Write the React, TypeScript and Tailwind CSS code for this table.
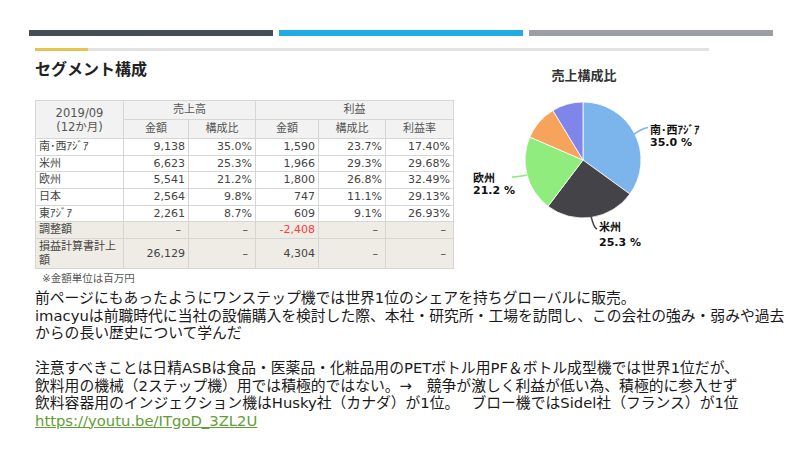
import React from "react";

const jp = { fontFamily: '"DejaVu Sans", "Noto Sans CJK JP", sans-serif' };
const cjk = { fontFamily: '"Noto Sans CJK JP", sans-serif' };

type Row = { name: string; v: string[] };

const rows: Row[] = [
  { name: "南･西ｱｼﾞｱ", v: ["9,138", "35.0%", "1,590", "23.7%", "17.40%"] },
  { name: "米州", v: ["6,623", "25.3%", "1,966", "29.3%", "29.68%"] },
  { name: "欧州", v: ["5,541", "21.2%", "1,800", "26.8%", "32.49%"] },
  { name: "日本", v: ["2,564", "9.8%", "747", "11.1%", "29.13%"] },
  { name: "東ｱｼﾞｱ", v: ["2,261", "8.7%", "609", "9.1%", "26.93%"] },
];

const cell = "border border-[#d6d6d6] px-[3px] leading-[14px]";

const Dash = () => <span className="pr-[4px] text-[#444]">–</span>;

// highcharts-ish pie, coords in page pixels
const slices = [
  { color: "#7cb5ec", d: "M583 160 L583 102 A58 58 0 0 1 629.9 194.1 Z" },
  { color: "#434348", d: "M583 160 L629.9 194.1 A58 58 0 0 1 548 206.3 Z" },
  { color: "#90ed7d", d: "M583 160 L548 206.3 A58 58 0 0 1 529.8 137 Z" },
  { color: "#f7a35c", d: "M583 160 L529.8 137 A58 58 0 0 1 552.9 110.5 Z" },
  { color: "#8085e9", d: "M583 160 L552.9 110.5 A58 58 0 0 1 583 102 Z" },
];

const PieChart = () => (
  <svg width="270" height="200" viewBox="460 60 270 200" className="mt-[2px]">
    <text x="584" y="80" textAnchor="middle" fontSize="13" fontWeight="bold" fill="#333" style={cjk}>
      売上構成比
    </text>
    {slices.map((s, i) => (
      <path key={i} d={s.d} fill={s.color} stroke="#fff" strokeWidth="0.8" />
    ))}
    <path d="M634 134 C639 131 643 128 648 127.5" fill="none" stroke="#7cb5ec" strokeWidth="1.5" />
    <path d="M591 217 C593 221 593 227 597 229" fill="none" stroke="#434348" strokeWidth="1.5" />
    <path d="M527 175 C522 176 517 177 512 177" fill="none" stroke="#90ed7d" strokeWidth="1.5" />
    <g fontSize="11" fontWeight="bold" fill="#111" style={jp}>
      <text x="650" y="134">南･西ｱｼﾞｱ</text>
      <text x="650" y="146">35.0 %</text>
      <text x="473" y="182">欧州</text>
      <text x="473" y="194">21.2 %</text>
      <text x="599" y="231">米州</text>
      <text x="599" y="246">25.3 %</text>
    </g>
  </svg>
);

const App: React.FC = () => {
  return (
    <div className="w-[800px] h-[450px] bg-white overflow-hidden text-[#1a1a1a]" style={jp}>
      {/* top bars */}
      <div className="flex gap-[6px] pt-[30px] pl-[29px]">
        <div className="w-[244px] h-[6px] bg-[#454e55]" />
        <div className="w-[244px] h-[6px] bg-[#1eade3]" />
        <div className="w-[244px] h-[6px] bg-[#9b9fa5]" />
      </div>
      <div className="ml-[35px] mt-[12px] w-[674px] h-[3px] bg-[#e2e2e2] flex">
        <div className="w-[53px] h-full bg-[#e6c24f]" />
      </div>

      <div className="flex h-[231px] mt-[7px] pl-[35px]">
        <div className="w-[425px] flex flex-col">
          <div className="text-[16px] leading-[20px] font-bold text-[#222]" style={cjk}>
            セグメント構成
          </div>
          <table className="mt-[22px] border-collapse table-fixed w-[418px] text-[11px] text-[#444]">
            <colgroup>
              <col className="w-[88px]" />
              <col className="w-[65px]" />
              <col className="w-[67px]" />
              <col className="w-[63px]" />
              <col className="w-[67px]" />
              <col className="w-[68px]" />
            </colgroup>
            <thead className="bg-[#f2f2f2] text-[#555]">
              <tr className="h-[19px]">
                <th rowSpan={2} className={`${cell} font-normal text-center text-[11.5px]`}>
                  2019/09
                  <br />
                  (12か月)
                </th>
                <th colSpan={2} className={`${cell} font-normal text-center`}>
                  売上高
                </th>
                <th colSpan={3} className={`${cell} font-normal text-center`}>
                  利益
                </th>
              </tr>
              <tr className="h-[19px]">
                <th className={`${cell} font-normal text-center`}>金額</th>
                <th className={`${cell} font-normal text-center`}>構成比</th>
                <th className={`${cell} font-normal text-center`}>金額</th>
                <th className={`${cell} font-normal text-center`}>構成比</th>
                <th className={`${cell} font-normal text-center`}>利益率</th>
              </tr>
            </thead>
            <tbody>
              {rows.map((r) => (
                <tr key={r.name} className="h-[16.7px]">
                  <td className={`${cell} text-left`}>{r.name}</td>
                  {r.v.map((x, i) => (
                    <td key={i} className={`${cell} text-right`}>
                      {x}
                    </td>
                  ))}
                </tr>
              ))}
              <tr className="h-[16.7px] bg-[#eeece4]">
                <td className={`${cell} text-left`}>調整額</td>
                <td className={`${cell} text-right`}><Dash /></td>
                <td className={`${cell} text-right`}><Dash /></td>
                <td className={`${cell} text-right text-[#ff3b3b]`}>-2,408</td>
                <td className={`${cell} text-right`}><Dash /></td>
                <td className={`${cell} text-right`}><Dash /></td>
              </tr>
              <tr className="h-[30px] bg-[#eeece4]">
                <td className={`${cell} text-left`}>
                  損益計算書計上
                  <br />
                  額
                </td>
                <td className={`${cell} text-right`}>26,129</td>
                <td className={`${cell} text-right`}><Dash /></td>
                <td className={`${cell} text-right`}>4,304</td>
                <td className={`${cell} text-right`}><Dash /></td>
                <td className={`${cell} text-right`}><Dash /></td>
              </tr>
            </tbody>
          </table>
          <div className="mt-[2px] pl-[7px] text-[10.5px] leading-[14px] text-[#555]">※金額単位は百万円</div>
        </div>
        <PieChart />
      </div>

      {/* comment text */}
      <div className="pl-[35px] text-[14.8px] leading-[17.5px] whitespace-pre">
        <div>前ページにもあったようにワンステップ機では世界1位のシェアを持ちグローバルに販売。</div>
        <div>imacyuは前職時代に当社の設備購入を検討した際、本社・研究所・工場を訪問し、この会社の強み・弱みや過去</div>
        <div>からの長い歴史について学んだ</div>
        <div>&nbsp;</div>
        <div>注意すべきことは日精ASBは食品・医薬品・化粧品用のPETボトル用PF＆ボトル成型機では世界1位だが、</div>
        <div>飲料用の機械（2ステップ機）用では積極的ではない。→　競争が激しく利益が低い為、積極的に参入せず</div>
        <div>飲料容器用のインジェクション機はHusky社（カナダ）が1位。　 ブロー機ではSidel社（フランス）が1位</div>
        <div>
          <a className="text-[#5e9e34] underline">https://youtu.be/ITgoD_3ZL2U</a>
        </div>
      </div>
    </div>
  );
};

export default App;
